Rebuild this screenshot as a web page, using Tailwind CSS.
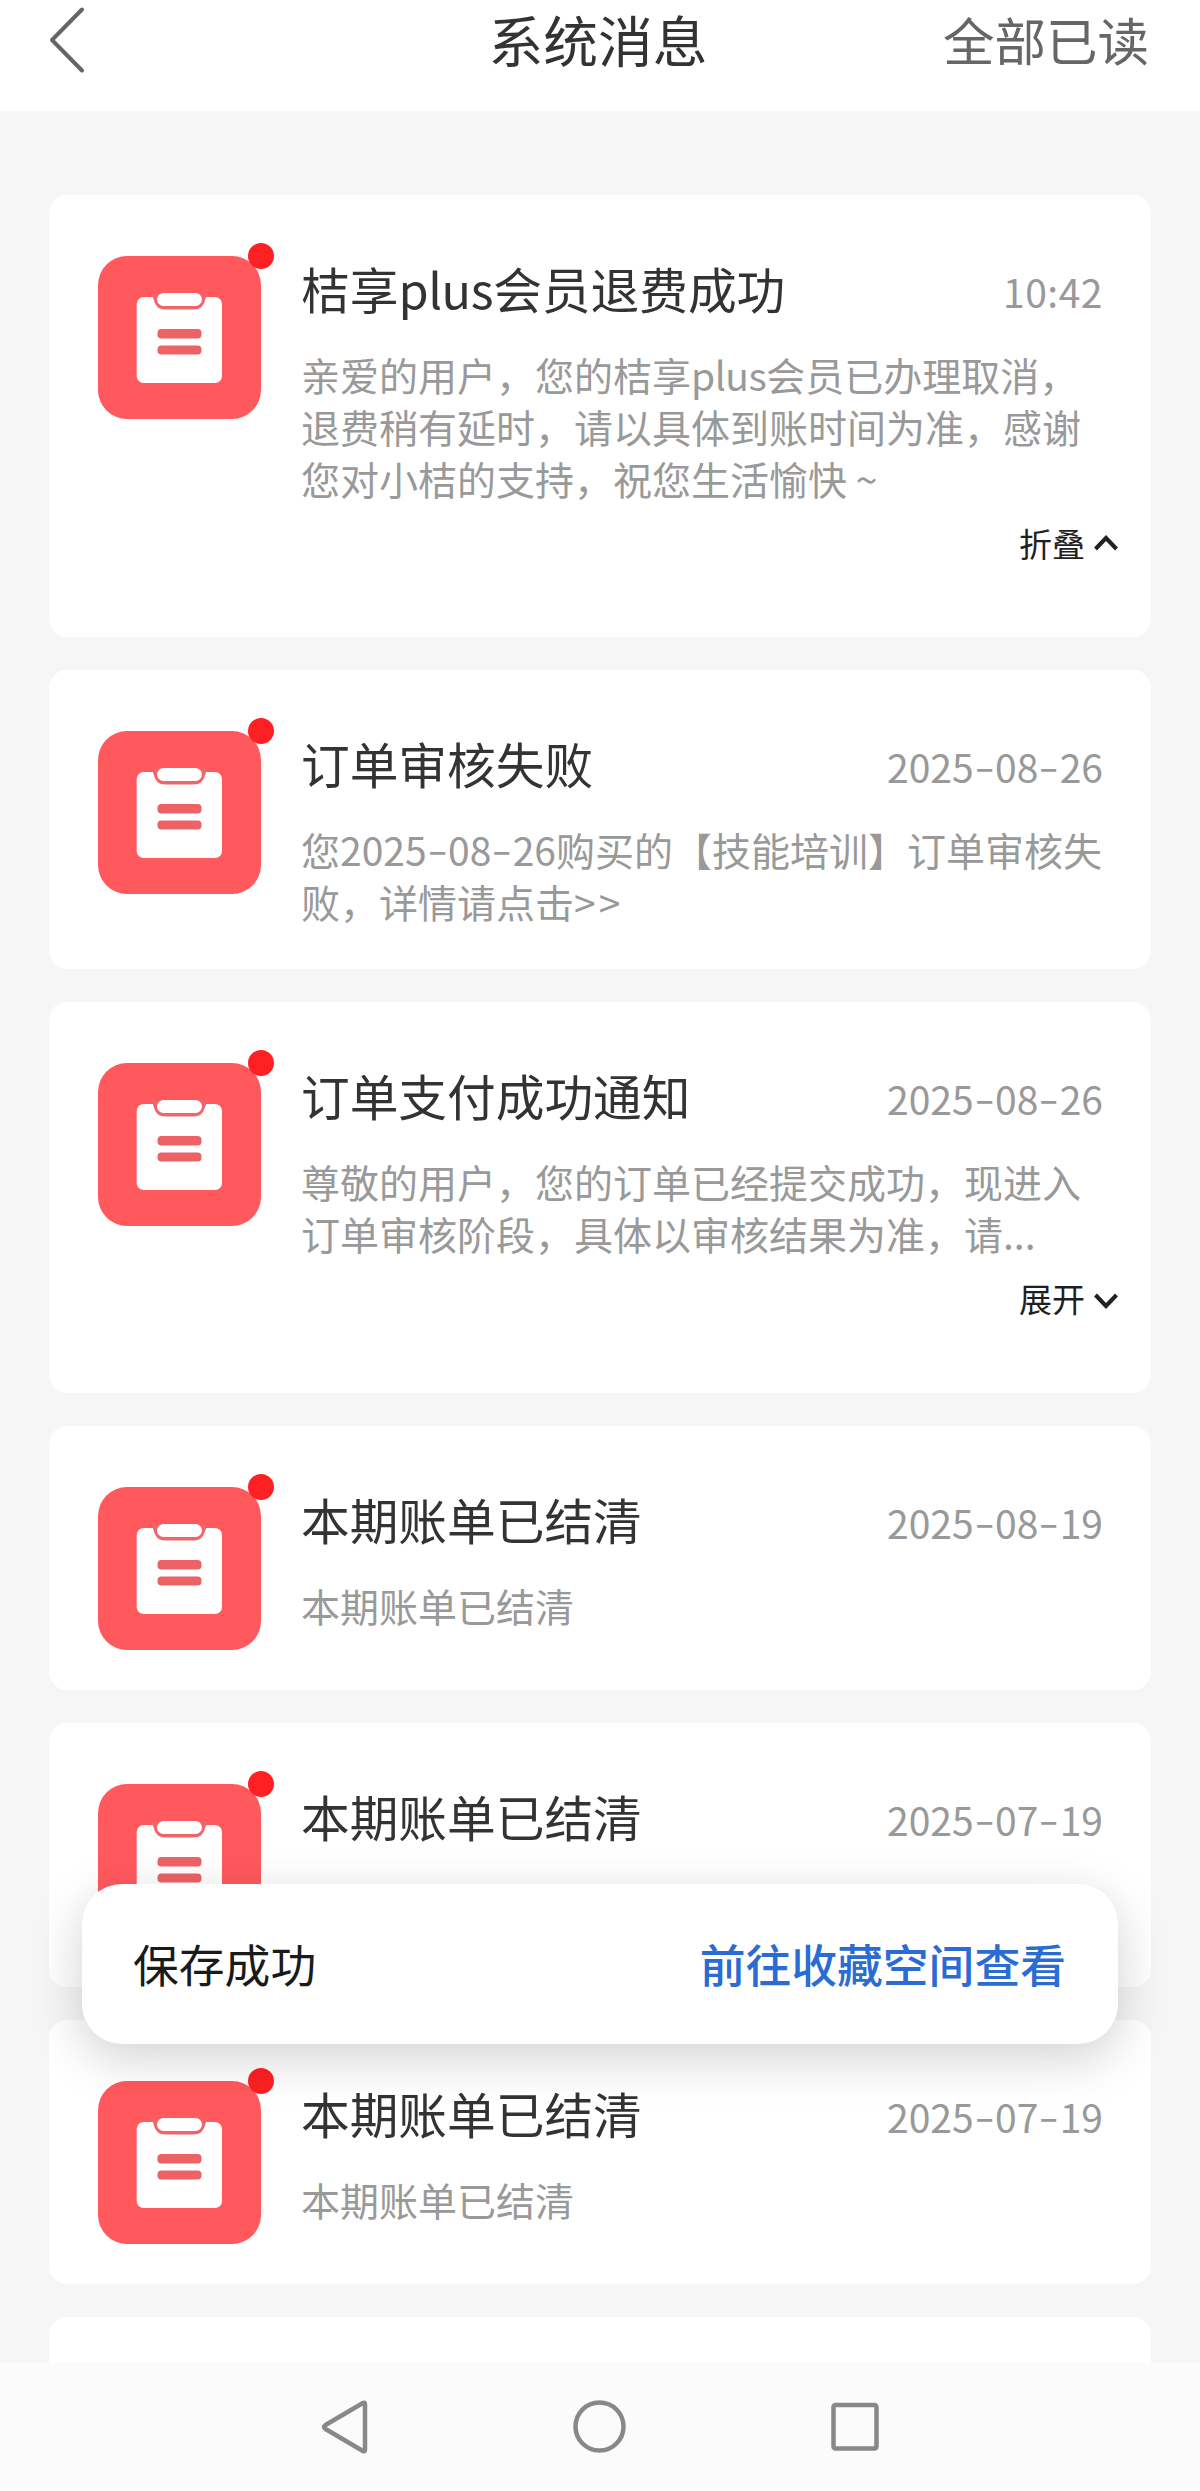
<!DOCTYPE html>
<html lang="zh-CN">
<head>
<meta charset="utf-8">
<title>系统消息</title>
<script src="https://cdn.jsdelivr.net/npm/@tailwindcss/browser@4"></script>
</head>
<body class="bg-[#f6f6f6] font-['Noto_Sans_CJK_SC',sans-serif]">
<svg class="hidden">
  <symbol id="clipboard" viewBox="0 0 163 163">
    <rect width="163" height="163" rx="29" fill="#ff595d"/>
    <rect x="38.7" y="41" width="85.3" height="86" rx="7" fill="#fff"/>
    <path d="M53 37.500H110C106 42 108 53.500 95.500 53.500H67.500C55 53.500 57 42 53 37.500Z" fill="#f0656a"/>
    <rect x="59" y="37" width="45" height="13" rx="6.500" fill="#fff"/>
    <rect x="59.500" y="73" width="44" height="9.500" rx="4" fill="#ee6265"/>
    <rect x="59.500" y="89.500" width="44" height="9" rx="4" fill="#ee6265"/>
  </symbol>
</svg>
<div class="relative flex h-[2491px] w-[1200px] flex-col overflow-hidden">

  <header class="grid h-[111px] shrink-0 grid-cols-3 items-start bg-white pr-[51px] pl-[47px]">
    <svg class="mt-[4px] h-[72px] w-[40px]" viewBox="0 0 40 72" fill="none" stroke="#666" stroke-width="4" stroke-linecap="round" stroke-linejoin="round"><path d="M35 5.500L5 36L35 66.500"/></svg>
    <h1 class="text-center text-[54.800px] leading-[77px] whitespace-nowrap text-[#333]">系统消息</h1>
    <button class="text-right text-[51.500px] leading-[77px] whitespace-nowrap text-[#666]">全部已读</button>
  </header>

  <main class="flex min-h-0 flex-1 flex-col gap-[33px] overflow-hidden px-[49px] pt-[83.500px]">

    <article class="flex h-[442.500px] shrink-0 rounded-[18px] bg-white pt-[61px] pr-[48px] pl-[49px]">
      <div class="relative h-[163px] w-[163px] shrink-0">
        <svg class="h-[163px] w-[163px]"><use href="#clipboard"/></svg>
        <span class="absolute -top-[13px] -right-[13px] h-[26px] w-[26px] rounded-full bg-[#fe2022]"></span>
      </div>
      <div class="-mt-[3px] ml-[40px] flex-1 whitespace-nowrap">
        <div class="flex h-[70px] items-center justify-between">
          <h2 class="text-[48.700px] leading-[70px] text-[#333]">桔享<span class="tracking-[-0.4px]">plus</span>会员退费成功</h2>
          <time class="pt-[6px] text-[39px] leading-[66px] tracking-[0.5px] text-[#999]">10:42</time>
        </div>
        <p class="mt-[25px] text-[39px] leading-[52px] text-[#999]">亲爱的用户，您的桔享<span class="tracking-[-0.5px]">plus</span>会员已办理取消，<br>退费稍有延时，请以具体到账时间为准，感谢<br>您对小桔的支持，祝您生活愉快<span class="inline-block w-[39px] text-center">~</span></p>
        <button class="mt-[18px] -mr-[15px] ml-auto flex h-[42px] items-center gap-[9px] text-[33px] leading-[42px] text-[#1f1f1f]">折叠<svg class="h-[18px] w-[24px]" viewBox="0 0 24 18" fill="none" stroke="#222" stroke-width="4"><path d="M1.500 15L12 4L22.500 15"/></svg></button>
      </div>
    </article>

    <article class="flex h-[298.500px] shrink-0 rounded-[18px] bg-white pt-[61px] pr-[48px] pl-[49px]">
      <div class="relative h-[163px] w-[163px] shrink-0">
        <svg class="h-[163px] w-[163px]"><use href="#clipboard"/></svg>
        <span class="absolute -top-[13px] -right-[13px] h-[26px] w-[26px] rounded-full bg-[#fe2022]"></span>
      </div>
      <div class="-mt-[3px] ml-[40px] flex-1 whitespace-nowrap">
        <div class="flex h-[70px] items-center justify-between">
          <h2 class="text-[48.700px] leading-[70px] text-[#333]">订单审核失败</h2>
          <time class="pt-[6px] text-[39px] leading-[66px] text-[#999]">2025<span class="inline-block w-[21.400px] -translate-y-[2px] scale-x-150 text-center">-</span>08<span class="inline-block w-[21.400px] -translate-y-[2px] scale-x-150 text-center">-</span>26</time>
        </div>
        <p class="mt-[25px] text-[39px] leading-[52px] text-[#999]">您2025<span class="inline-block w-[21.400px] -translate-y-[2px] scale-x-150 text-center">-</span>08<span class="inline-block w-[21.400px] -translate-y-[2px] scale-x-150 text-center">-</span>26购买的【技能培训】订单审核失<br>败，详情请点击<span class="tracking-[3px]">&gt;&gt;</span></p>
      </div>
    </article>

    <article class="flex h-[391.500px] shrink-0 rounded-[18px] bg-white pt-[61px] pr-[48px] pl-[49px]">
      <div class="relative h-[163px] w-[163px] shrink-0">
        <svg class="h-[163px] w-[163px]"><use href="#clipboard"/></svg>
        <span class="absolute -top-[13px] -right-[13px] h-[26px] w-[26px] rounded-full bg-[#fe2022]"></span>
      </div>
      <div class="-mt-[3px] ml-[40px] flex-1 whitespace-nowrap">
        <div class="flex h-[70px] items-center justify-between">
          <h2 class="text-[48.700px] leading-[70px] text-[#333]">订单支付成功通知</h2>
          <time class="pt-[6px] text-[39px] leading-[66px] text-[#999]">2025<span class="inline-block w-[21.400px] -translate-y-[2px] scale-x-150 text-center">-</span>08<span class="inline-block w-[21.400px] -translate-y-[2px] scale-x-150 text-center">-</span>26</time>
        </div>
        <p class="mt-[25px] text-[39px] leading-[52px] text-[#999]">尊敬的用户，您的订单已经提交成功，现进入<br>订单审核阶段，具体以审核结果为准，请...</p>
        <button class="mt-[18px] -mr-[15px] ml-auto flex h-[42px] items-center gap-[9px] text-[33px] leading-[42px] text-[#1f1f1f]">展开<svg class="mt-[6px] h-[18px] w-[24px]" viewBox="0 0 24 18" fill="none" stroke="#222" stroke-width="4"><path d="M1.500 3L12 14L22.500 3"/></svg></button>
      </div>
    </article>

    <article class="flex h-[264px] shrink-0 rounded-[18px] bg-white pt-[61px] pr-[48px] pl-[49px]">
      <div class="relative h-[163px] w-[163px] shrink-0">
        <svg class="h-[163px] w-[163px]"><use href="#clipboard"/></svg>
        <span class="absolute -top-[13px] -right-[13px] h-[26px] w-[26px] rounded-full bg-[#fe2022]"></span>
      </div>
      <div class="-mt-[3px] ml-[40px] flex-1 whitespace-nowrap">
        <div class="flex h-[70px] items-center justify-between">
          <h2 class="text-[48.700px] leading-[70px] text-[#333]">本期账单已结清</h2>
          <time class="pt-[6px] text-[39px] leading-[66px] text-[#999]">2025<span class="inline-block w-[21.400px] -translate-y-[2px] scale-x-150 text-center">-</span>08<span class="inline-block w-[21.400px] -translate-y-[2px] scale-x-150 text-center">-</span>19</time>
        </div>
        <p class="mt-[25px] text-[39px] leading-[52px] text-[#999]">本期账单已结清</p>
      </div>
    </article>

    <article class="flex h-[264px] shrink-0 rounded-[18px] bg-white pt-[61px] pr-[48px] pl-[49px]">
      <div class="relative h-[163px] w-[163px] shrink-0">
        <svg class="h-[163px] w-[163px]"><use href="#clipboard"/></svg>
        <span class="absolute -top-[13px] -right-[13px] h-[26px] w-[26px] rounded-full bg-[#fe2022]"></span>
      </div>
      <div class="-mt-[3px] ml-[40px] flex-1 whitespace-nowrap">
        <div class="flex h-[70px] items-center justify-between">
          <h2 class="text-[48.700px] leading-[70px] text-[#333]">本期账单已结清</h2>
          <time class="pt-[6px] text-[39px] leading-[66px] text-[#999]">2025<span class="inline-block w-[21.400px] -translate-y-[2px] scale-x-150 text-center">-</span>07<span class="inline-block w-[21.400px] -translate-y-[2px] scale-x-150 text-center">-</span>19</time>
        </div>
      </div>
    </article>

    <article class="flex h-[264px] shrink-0 rounded-[18px] bg-white pt-[61px] pr-[48px] pl-[49px]">
      <div class="relative h-[163px] w-[163px] shrink-0">
        <svg class="h-[163px] w-[163px]"><use href="#clipboard"/></svg>
        <span class="absolute -top-[13px] -right-[13px] h-[26px] w-[26px] rounded-full bg-[#fe2022]"></span>
      </div>
      <div class="-mt-[3px] ml-[40px] flex-1 whitespace-nowrap">
        <div class="flex h-[70px] items-center justify-between">
          <h2 class="text-[48.700px] leading-[70px] text-[#333]">本期账单已结清</h2>
          <time class="pt-[6px] text-[39px] leading-[66px] text-[#999]">2025<span class="inline-block w-[21.400px] -translate-y-[2px] scale-x-150 text-center">-</span>07<span class="inline-block w-[21.400px] -translate-y-[2px] scale-x-150 text-center">-</span>19</time>
        </div>
        <p class="mt-[25px] text-[39px] leading-[52px] text-[#999]">本期账单已结清</p>
      </div>
    </article>

    <article class="h-[264px] shrink-0 rounded-[18px] bg-white"></article>
  </main>

  <!-- Toast -->
  <div class="absolute top-[1884px] left-[82px] flex h-[160px] w-[1036px] items-center justify-between rounded-[40px] bg-white pr-[52px] pb-[3px] pl-[51px] text-[45.800px] leading-[70px] whitespace-nowrap shadow-[0_14px_50px_rgba(0,0,0,0.18)]">
    <span class="text-[#1a1a1a]">保存成功</span>
    <a class="font-medium text-[#2a6cd4]">前往收藏空间查看</a>
  </div>

  <!-- System navigation -->
  <nav class="relative flex h-[128px] shrink-0 items-start justify-center gap-[200px] bg-[#fbfbfb] pt-[35px]" aria-label="系统导航">
    <svg class="h-[58px] w-[56px]" viewBox="0 0 56 58" fill="none" stroke="#888" stroke-width="4.500" stroke-linejoin="round"><path d="M49 6Q49 3.800 46.500 5.200L9.500 27Q6.500 29 9.500 31L46.500 52.800Q49 54.200 49 52Z"/></svg>
    <svg class="h-[58px] w-[56px]" viewBox="0 0 56 58" fill="none" stroke="#888" stroke-width="4.500"><circle cx="27.500" cy="28.500" r="24"/></svg>
    <svg class="h-[58px] w-[56px]" viewBox="0 0 56 58" fill="none" stroke="#888" stroke-width="4.500"><rect x="5.500" y="7" width="43" height="43.500" rx="2"/></svg>
  </nav>
</div>
</body>
</html>
